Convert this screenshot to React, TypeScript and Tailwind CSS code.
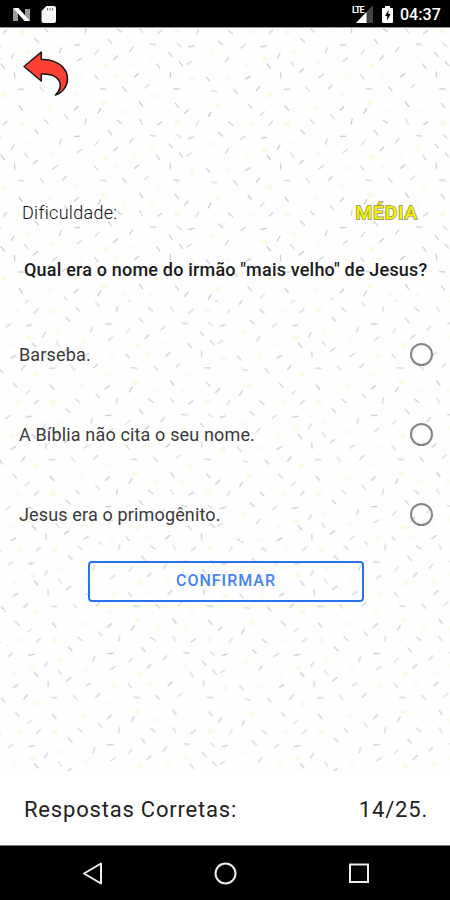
import { useId } from "react";
import type { ReactNode } from "react";

// Confetti tile, in thirds of a pixel: [x, y, angle]
const DASHES: number[][] = [
  [15, 39, -45], [110, 65, 45], [38, 111, -60], [8, 142, 50], [79, 136, 55], [44, 170, 85],
  [106, 156, -40], [63, 212, 0], [125, 211, 50], [62, 268, 50], [139, 35, 45], [181, 95, -70],
  [238, 123, -35], [165, 172, -35], [193, 205, -45], [228, 269, -45], [199, 20, 50], [257, 34, -80],
  [231, 79, -3], [330, 68, 50], [291, 99, -50], [347, 117, -45], [358, 35, 35], [394, 92, -50],
  [289, 175, 50], [309, 211, 5], [373, 211, 50], [298, 276, -60],
  [423, 35, 60], [479, 40, -35], [559, 5, -45], [459, 77, 5], [537, 79, 40], [574, 83, -15],
  [512, 108, 50], [543, 135, 50], [567, 133, -30], [475, 143, 55], [511, 168, 88], [410, 170, -40],
  [440, 203, -40], [529, 211, 3], [423, 256, 55], [531, 260, 50], [592, 40, -60], [629, 13, -60],
  [692, 41, 40], [662, 73, 40], [729, 83, -40], [681, 123, -55], [624, 181, 50], [744, 177, -30],
  [642, 217, 10], [707, 219, 50], [774, 210, -50], [749, 262, 50], [787, 10, -40], [791, 83, -10],
];
const DOTS: number[][] = [
  [65, 40], [82, 100], [157, 130], [12, 230], [228, 228], [243, 175], [318, 142], [348, 170],
  [150, 265], [312, 255], [372, 5], [454, 5], [530, 38], [757, 40], [637, 103], [794, 120],
  [741, 140], [684, 178], [576, 183], [474, 232], [404, 138], [654, 262], [456, 118],
];
const WRAPS = [[0, 0], [0, -274], [0, 274], [-798, 0], [798, 0]];

function Confetti({ x, y }: { x: number; y: number }) {
  const id = useId();
  return (
    <svg className="absolute inset-0 h-full w-full" aria-hidden="true">
      <defs>
        <pattern id={id} x={x} y={y} width="266" height="91.33" patternUnits="userSpaceOnUse">
          {WRAPS.map(([dx, dy]) => (
            <g key={`${dx},${dy}`} transform={`scale(.33333) translate(${dx} ${dy})`}>
              {DOTS.map(([cx, cy], i) => (
                <ellipse key={i} cx={cx} cy={cy} rx="9" ry="7" fill="#faf9e2" opacity={i % 3 ? 0.5 : 0.85} />
              ))}
              {DASHES.map(([cx, cy, a], i) => (
                <path key={i} d="M-8 0H8" transform={`translate(${cx} ${cy}) rotate(${a})`} stroke={i % 3 ? "#c4cccc" : "#b8c3c4"} strokeWidth="3.8" strokeLinecap="round" opacity={i % 4 ? 0.85 : 0.65} />
              ))}
            </g>
          ))}
        </pattern>
      </defs>
      <rect width="100%" height="100%" fill={`url(#${id})`} />
    </svg>
  );
}

function Section({ x, y, className, children }: { x: number; y: number; className: string; children: ReactNode }) {
  return (
    <section className={`relative overflow-hidden bg-[#fdfefd] ${className}`}>
      <Confetti x={x} y={y} />
      <div className="relative">{children}</div>
    </section>
  );
}

function StatusBar() {
  return (
    <header className="flex h-[27px] items-center bg-black text-white">
      <svg width="70" height="27" viewBox="0 0 70 27">
        <path d="M13 8.5l5 4v8.500h-5zM25 9h5v12l-5-4z" fill="#999" />
        <path d="M13 8h5.500l11.500 13h-5.500z" fill="#fff" />
        <path d="M46.500 6H54a2 2 0 0 1 2 2v13a2 2 0 0 1-2 2H43.500a2 2 0 0 1-2-2V11z" fill="#f5f5f5" />
        <path d="M47.500 8v2.500M50 8v2.500M52.500 8v2.500" stroke="#777" />
      </svg>
      <div className="ml-auto flex items-center pr-[9px]">
        <div className="relative h-[27px] w-[24px]">
          <svg className="absolute inset-0" width="24" height="27">
            <path d="M22 5v18H5z" fill="#444" />
            <path d="M15.500 12v11H5z" fill="#fff" />
          </svg>
          <span className="absolute left-[1px] top-[5px] text-[9px] font-bold leading-[10px] tracking-[-0.9px]">LTE</span>
        </div>
        <svg className="ml-[6px]" width="14" height="27">
          <path d="M4 6h5v2h2a1 1 0 0 1 1 1v13a1 1 0 0 1-1 1H2a1 1 0 0 1-1-1V9a1 1 0 0 1 1-1h2z" fill="#fff" />
          <path d="M7.500 10L4 16h2.200v4.500L9.500 14H7.300z" fill="#000" />
        </svg>
        <span className="ml-[5px] mt-[3px] text-[16px] font-medium leading-[20px] tracking-[0.1px]">04:37</span>
      </div>
    </header>
  );
}

function Option({ label }: { label: string }) {
  return (
    <label className="flex h-20 items-center justify-between pl-[19px] pr-[17px] text-[18px] tracking-[0.15px] text-[#3a3a3a]">
      <span className="pt-px">{label}</span>
      <span className="size-[23px] rounded-full border-2 border-[#858585]" />
    </label>
  );
}

export default function App() {
  return (
    <main className="flex h-[900px] w-[450px] flex-col overflow-hidden bg-white font-['Roboto',sans-serif]">
      <StatusBar />
      <div className="h-px bg-[#999]" />
      <Section x={0} y={82} className="h-[272px]">
        <svg className="ml-[20px] block pt-[20px]" width="52" height="72" viewBox="20 48 52 52">
          <path d="M24 66.500L41.300 52v7.500C57 59 67.500 68 67.500 79c0 7-5 14-12 16 5-5 6-10 3.500-14.500-3-5-10-7-17.700-6.500v7z" fill="#fc4033" stroke="#161616" strokeWidth="1.500" strokeLinejoin="round" />
        </svg>
        <div className="mt-[100px] flex h-[26px] items-center justify-between pl-[22px] pr-[32px]">
          <span className="pb-[2px] text-[18px] font-light tracking-[0.3px] text-[#111]">Dificuldade:</span>
          <span className="pt-px text-[19px] font-medium tracking-[0.9px] text-[#f6f000] [paint-order:stroke_fill] [-webkit-text-stroke:1.500px_#8d8d55]">MÉDIA</span>
        </div>
        <h1 className="mt-[32px] whitespace-nowrap pl-[24px] text-[18px] font-medium leading-[24px] tracking-[0.19px] text-[#1a1a1a]">
          Qual era o nome do irmão "mais velho" de Jesus?
        </h1>
      </Section>
      <Section x={31.3} y={-2.300} className="h-[241px]">
        <div className="pt-[14px]">
          <Option label="Barseba." />
          <Option label="A Bíblia não cita o seu nome." />
          <Option label="Jesus era o primogênito." />
        </div>
      </Section>
      <Section x={33.5} y={-5.200} className="h-[230px]">
        <div className="flex pl-[88px] pt-[20px]">
          <button className="h-[41px] w-[276px] rounded-[4px] border-2 border-[#2a72ed] pb-px text-[16px] font-medium tracking-[1px] text-[#4684ee]">
            CONFIRMAR
          </button>
        </div>
      </Section>
      <footer className="flex h-[74px] items-center justify-between bg-white pl-[24px] pr-[22px] pt-[2px] text-[22px] tracking-[0.8px] text-[#222]">
        <span>Respostas Corretas:</span>
        <span>14/25.</span>
      </footer>
      <div className="h-px bg-[#777]" />
      <nav className="h-[54px] bg-black">
        <svg width="450" height="54" fill="none" stroke="#eee" strokeWidth="2">
          <path d="M101 17.500v20L84 27.500z" strokeLinejoin="round" />
          <circle cx="225.500" cy="27.500" r="10" />
          <path d="M350 18.500h18v17.500h-18z" />
        </svg>
      </nav>
    </main>
  );
}
